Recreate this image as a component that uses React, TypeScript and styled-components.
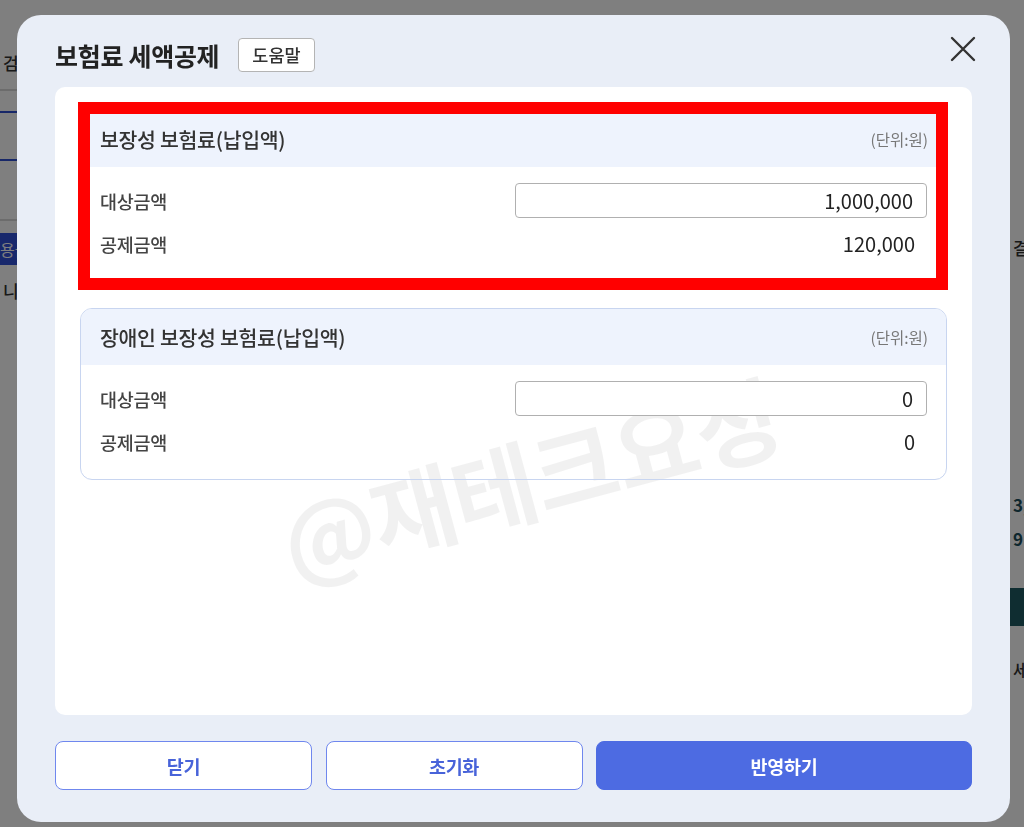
import React from "react";
import styled, { createGlobalStyle } from "styled-components";

const GlobalStyle = createGlobalStyle`
  html, body {
    margin: 0;
    padding: 0;
    height: 100%;
    overflow: hidden;
  }
  body {
    font-family: "Noto Sans CJK KR", "Noto Sans", sans-serif;
    color: #222;
  }
  * {
    box-sizing: border-box;
  }
`;

// page behind the modal, only its edges show
const Page = styled.div`
  position: relative;
  height: 827px;
  background: #fff;
  display: flex;
  justify-content: space-between;
`;

const SideCol = styled.div<{ $width: number }>`
  width: ${(p) => p.$width}px;
  display: flex;
  flex-direction: column;
  align-items: flex-start;
  font-size: 17px;
  color: #333;
  overflow: hidden;
`;

const SideText = styled.div<{ $top: number; $bold?: boolean; $color?: string }>`
  margin-top: ${(p) => p.$top}px;
  line-height: 24px;
  white-space: nowrap;
  font-weight: ${(p) => (p.$bold ? 700 : 500)};
  color: ${(p) => p.$color || "#333"};
  padding: 0 3px;
`;

const SideLine = styled.div<{ $top: number; $color: string }>`
  margin-top: ${(p) => p.$top}px;
  width: 100%;
  height: 2px;
  background: ${(p) => p.$color};
`;

const SideBadge = styled.div<{ $top: number; $bg: string; $height: number }>`
  margin-top: ${(p) => p.$top}px;
  width: 100%;
  height: ${(p) => p.$height}px;
  background: ${(p) => p.$bg};
  color: #fff;
  font-size: 16px;
  line-height: ${(p) => p.$height}px;
  white-space: nowrap;
`;

const Backdrop = styled.div`
  position: fixed;
  inset: 0;
  background: rgba(0, 0, 0, 0.5);
  display: flex;
  align-items: flex-start;
  padding: 15px 0 0 17px;
`;

const Dialog = styled.div`
  position: relative;
  width: 993px;
  height: 807px;
  background: #e9eef7;
  border-radius: 24px;
  display: flex;
  flex-direction: column;
  overflow: hidden;
`;

const Header = styled.div`
  display: flex;
  align-items: center;
  padding: 23px 38px 0;
  height: 34px;
  box-sizing: content-box;
`;

const Title = styled.h2`
  margin: 0;
  font-size: 25px;
  font-weight: 700;
  color: #222;
  letter-spacing: -0.3px;
  line-height: 34px;
`;

const HelpButton = styled.button`
  margin-left: 19px;
  height: 34px;
  padding: 0 13px;
  background: #fff;
  border: 1px solid #b4b4b4;
  border-radius: 4px;
  font-family: inherit;
  font-size: 17.5px;
  font-weight: 500;
  color: #333;
  line-height: 1;
`;

const CloseButton = styled.button`
  margin: -3px -5px 0 auto;
  align-self: flex-start;
  width: 28px;
  height: 28px;
  padding: 0;
  border: none;
  background: transparent;
  display: flex;
  align-items: center;
  justify-content: center;
`;

const Panel = styled.div`
  position: relative;
  flex: 1;
  margin: 15px 38px 0;
  background: #fff;
  border-radius: 10px;
  padding: 23px 25px;
  display: flex;
  flex-direction: column;
  gap: 26px;
  overflow: hidden;
`;

const Watermark = styled.div`
  position: absolute;
  left: 474px;
  top: 388px;
  transform: translate(-50%, -50%) rotate(-15deg);
  font-size: 92px;
  font-weight: 700;
  color: rgba(0, 0, 0, 0.055);
  white-space: nowrap;
  pointer-events: none;
  letter-spacing: -1px;
  z-index: 0;
`;

const Marked = styled.div`
  position: relative;
  z-index: 1;
`;

const Highlight = styled.div`
  position: absolute;
  z-index: 2;
  top: -8px;
  bottom: -8px;
  left: -2px;
  right: -1px;
  border: 12px solid #ff0000;
  pointer-events: none;
`;

const Card = styled.section`
  position: relative;
  z-index: 1;
  border: 1px solid #c8d5f0;
  border-radius: 12px;
  overflow: hidden;
`;

const CardHead = styled.div`
  height: 56px;
  background: #eef3fd;
  display: flex;
  align-items: center;
  justify-content: space-between;
  padding: 0 18px 0 19px;
`;

const CardTitle = styled.h3`
  margin: 0;
  font-size: 20.5px;
  font-weight: 500;
  color: #333;
  letter-spacing: -0.3px;
`;

const Unit = styled.span`
  font-size: 15.5px;
  color: #777;
`;

const CardBody = styled.div`
  padding: 16px 19px 20px;
  display: flex;
  flex-direction: column;
  gap: 8px;
`;

const Row = styled.div`
  height: 35px;
  display: flex;
  align-items: center;
  justify-content: space-between;
`;

const Label = styled.span`
  font-size: 18.5px;
  font-weight: 500;
  color: #444;
  letter-spacing: -0.3px;
`;

const AmountInput = styled.input`
  width: 412px;
  height: 35px;
  border: 1px solid #b0b0b0;
  border-radius: 4px;
  padding: 0 13px;
  text-align: right;
  font-family: inherit;
  font-size: 20px;
  color: #222;
  background: #fff;
  outline: none;
`;

const Amount = styled.span`
  padding-right: 12px;
  font-size: 20px;
  color: #222;
`;

const Footer = styled.div`
  display: grid;
  grid-template-columns: 257fr 257fr 376fr;
  gap: 13.5px;
  padding: 26px 38px 32px;
`;

const ActionButton = styled.button<{ $primary?: boolean }>`
  height: 49px;
  border-radius: 8px;
  border: 1.5px solid ${(p) => (p.$primary ? "#4d6be2" : "#6f87ee")};
  background: ${(p) => (p.$primary ? "#4d6be2" : "#fff")};
  color: ${(p) => (p.$primary ? "#fff" : "#4863d9")};
  font-family: inherit;
  font-size: 18.5px;
  font-weight: 700;
  letter-spacing: -0.3px;
`;

type Item = { title: string; target: string; deduction: string };

const items: Item[] = [
  { title: "보장성 보험료(납입액)", target: "1,000,000", deduction: "120,000" },
  { title: "장애인 보장성 보험료(납입액)", target: "0", deduction: "0" },
];

function DeductionCard({ item }: { item: Item }) {
  return (
    <Card>
      <CardHead>
        <CardTitle>{item.title}</CardTitle>
        <Unit>(단위:원)</Unit>
      </CardHead>
      <CardBody>
        <Row>
          <Label>대상금액</Label>
          <AmountInput value={item.target} readOnly />
        </Row>
        <Row>
          <Label>공제금액</Label>
          <Amount>{item.deduction}</Amount>
        </Row>
      </CardBody>
    </Card>
  );
}

export default function App() {
  return (
    <>
      <GlobalStyle />
      <Page>
        <SideCol $width={40}>
          <SideText $top={51}>검색</SideText>
          <SideLine $top={14} $color="#d8d8d8" />
          <SideLine $top={20} $color="#2f4fd0" />
          <SideLine $top={46} $color="#2f4fd0" />
          <SideLine $top={58} $color="#d8d8d8" />
          <SideBadge $top={12} $bg="#3050d8" $height={32}>
            용금
          </SideBadge>
          <SideText $top={14}>니(0</SideText>
        </SideCol>
        <SideCol $width={14}>
          <SideText $top={236}>결정</SideText>
          <SideText $top={233} $bold $color="#1d4f5c">
            3,
          </SideText>
          <SideText $top={10} $bold $color="#1d4f5c">
            9
          </SideText>
          <SideBadge $top={37} $bg="#1f5a62" $height={38} />
          <SideText $top={32}>세</SideText>
        </SideCol>
      </Page>
      <Backdrop>
        <Dialog>
          <Header>
            <Title>보험료 세액공제</Title>
            <HelpButton>도움말</HelpButton>
            <CloseButton aria-label="닫기">
              <svg width="26" height="26" viewBox="0 0 26 26" fill="none">
                <path
                  d="M2 2L24 24M24 2L2 24"
                  stroke="#333"
                  strokeWidth="2.4"
                  strokeLinecap="round"
                />
              </svg>
            </CloseButton>
          </Header>
          <Panel>
            <Watermark>@재테크요정</Watermark>
            <Marked>
              <DeductionCard item={items[0]} />
              <Highlight />
            </Marked>
            <DeductionCard item={items[1]} />
          </Panel>
          <Footer>
            <ActionButton>닫기</ActionButton>
            <ActionButton>초기화</ActionButton>
            <ActionButton $primary>반영하기</ActionButton>
          </Footer>
        </Dialog>
      </Backdrop>
    </>
  );
}
